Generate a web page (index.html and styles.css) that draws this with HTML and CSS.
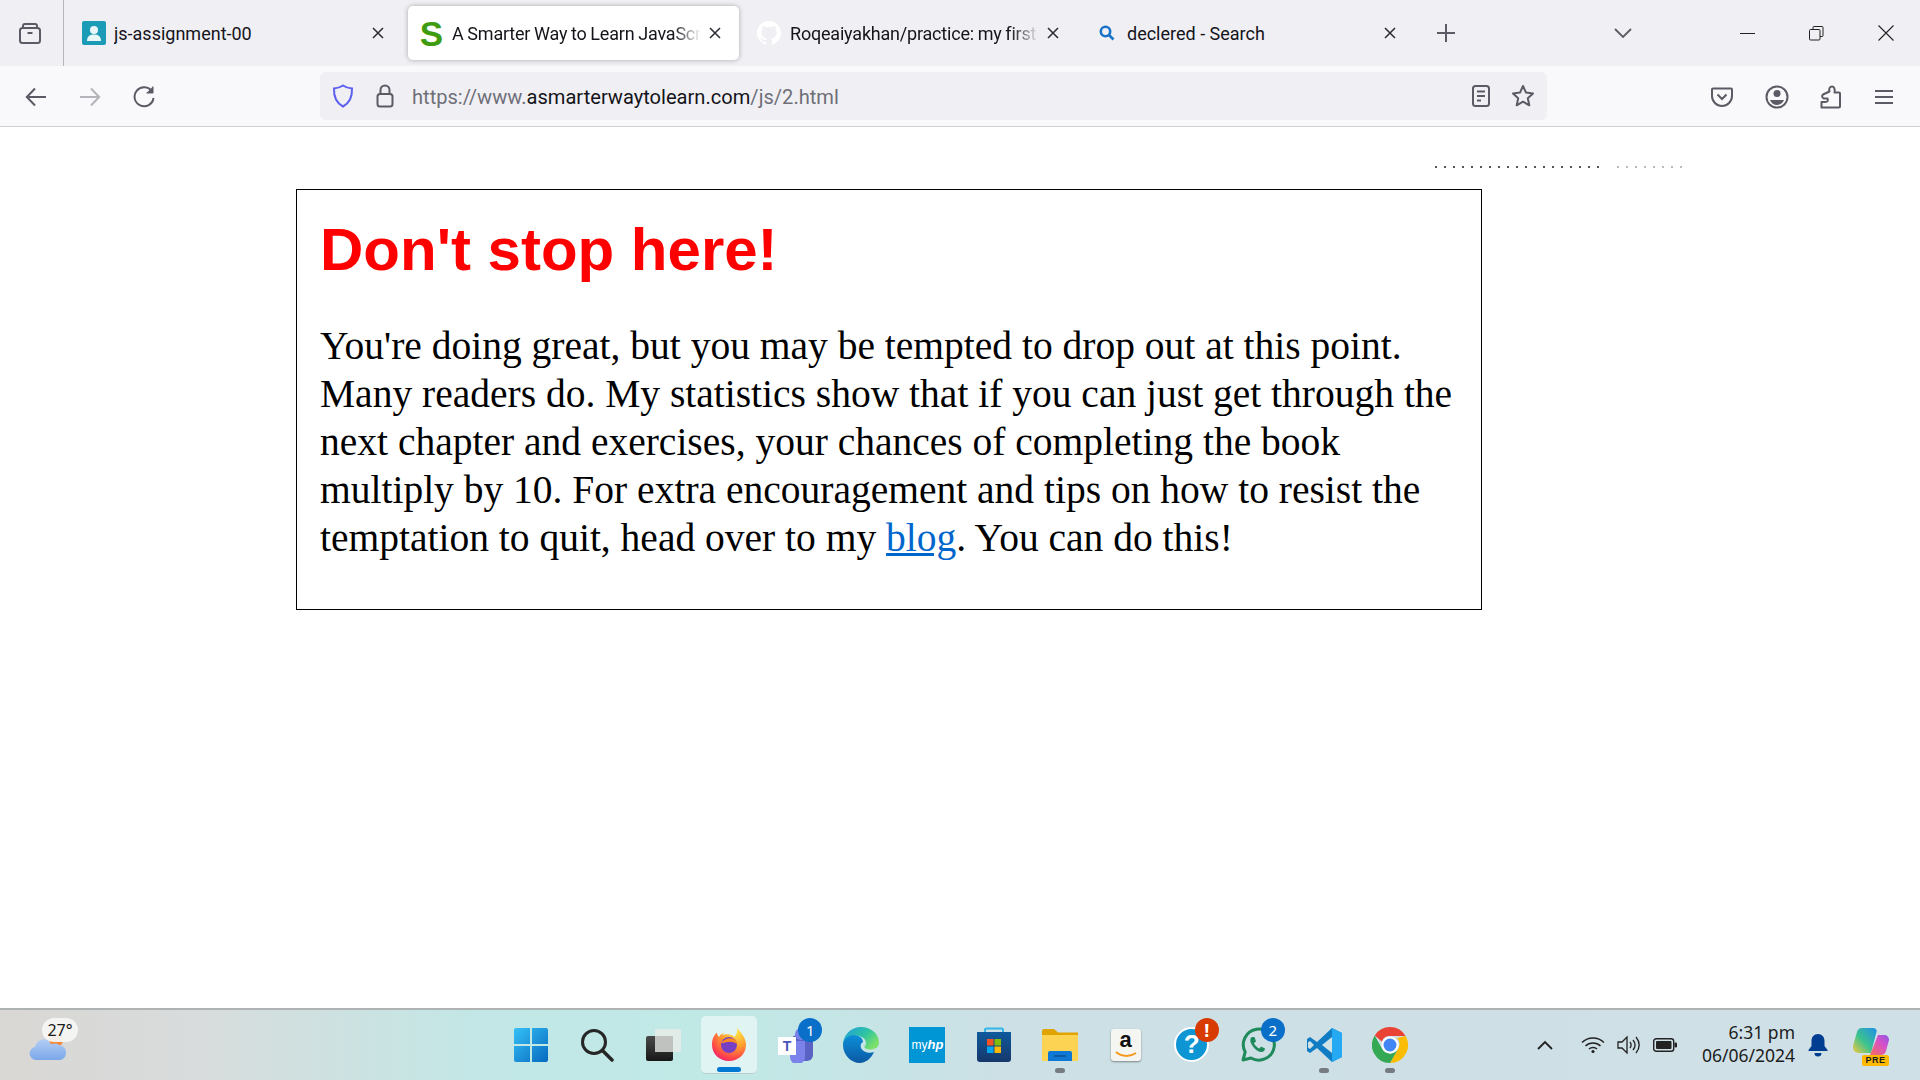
FILE: index.html
```html
<!DOCTYPE html><html lang="en">
<head>
  <meta charset="utf-8">
  <title>A Smarter Way to Learn JavaScript</title>
  <link rel="stylesheet" href="styles.css">
</head>
<body>

<div class="window">

  <header class="tabbar">
    <button class="tabview"><svg width="24" height="24" viewBox="0 0 24 24" fill="none" stroke="#5b5b66" stroke-width="2"><path d="M5 6.500V5a2 2 0 0 1 2-2h10a2 2 0 0 1 2 2v1.500"/><rect x="2" y="7" width="20" height="15" rx="2.500"/><path d="M9.500 12h5"/></svg></button>

    <div class="tab tab-first">
      <svg class="favicon" width="24" height="24" viewBox="0 0 24 24"><rect width="24" height="24" rx="2" fill="#1b9bb5"/><circle cx="12" cy="9" r="4" fill="#e8f6f8"/><path d="M5 20c0-5 3-6.500 7-6.500s7 1.500 7 6.500z" fill="#e8f6f8"/></svg>
      <span class="tab-title">js-assignment-00</span>
      <svg class="tab-close" width="12" height="12" viewBox="0 0 12 12"><path d="M1 1l10 10M11 1L1 11" stroke="#2b2a33" stroke-width="1.500"/></svg>
    </div>

    <div class="tab tab-active">
      <span class="s-logo">S</span>
      <span class="tab-title fade">A Smarter Way to Learn JavaScript</span>
      <svg class="tab-close" width="12" height="12" viewBox="0 0 12 12"><path d="M1 1l10 10M11 1L1 11" stroke="#2b2a33" stroke-width="1.500"/></svg>
    </div>

    <div class="tab tab-github">
      <svg class="favicon" width="24" height="24" viewBox="0 0 16 16"><path fill="#fff" d="M8 0C3.580 0 0 3.580 0 8c0 3.540 2.290 6.530 5.470 7.590.4.070.55-.17.55-.38v-1.340c-2.230.48-2.690-1.070-2.690-1.070-.36-.92-.89-1.170-.89-1.170-.73-.5.05-.49.05-.49.8.060 1.220.83 1.220.83.71 1.220 1.870.87 2.330.66.070-.52.28-.87.51-1.070-1.780-.2-3.640-.89-3.640-3.950 0-.87.31-1.590.82-2.150-.08-.2-.36-1.020.08-2.120 0 0 .67-.21 2.200.82a7.600 7.600 0 0 1 4 0c1.530-1.040 2.200-.82 2.200-.82.44 1.100.16 1.920.08 2.120.51.560.82 1.270.82 2.150 0 3.070-1.870 3.750-3.650 3.950.29.250.54.730.54 1.480v2.200c0 .21.15.46.55.38A8 8 0 0 0 16 8c0-4.420-3.580-8-8-8z"/></svg>
      <span class="tab-title fade">Roqeaiyakhan/practice: my first project</span>
      <svg class="tab-close" width="12" height="12" viewBox="0 0 12 12"><path d="M1 1l10 10M11 1L1 11" stroke="#2b2a33" stroke-width="1.500"/></svg>
    </div>

    <div class="tab tab-search">
      <svg class="favicon" width="16" height="16" viewBox="0 0 16 16" fill="none" stroke="#1a73c9" stroke-width="2.600"><circle cx="6.500" cy="6.500" r="4.700"/><path d="M10 10l4.500 4.500"/></svg>
      <span class="tab-title">declered - Search</span>
      <svg class="tab-close" width="12" height="12" viewBox="0 0 12 12"><path d="M1 1l10 10M11 1L1 11" stroke="#2b2a33" stroke-width="1.500"/></svg>
    </div>

    <svg class="newtab" width="18" height="18" viewBox="0 0 18 18"><path d="M9 0v18M0 9h18" stroke="#5b5b66" stroke-width="2"/></svg>
    <svg class="tablist" width="18" height="10" viewBox="0 0 18 10" fill="none"><path d="M1 1l8 8 8-8" stroke="#5b5b66" stroke-width="1.800"/></svg>

    <div class="wincontrols">
      <svg width="15" height="15" viewBox="0 0 15 15"><path d="M0 7.500h15" stroke="#222" stroke-width="1"/></svg>
      <svg width="15" height="15" viewBox="0 0 15 15" fill="none" stroke="#222"><rect x=".5" y="3.500" width="10.500" height="10.500" rx="1"/><path d="M4 3.500V1.500a1 1 0 0 1 1-1h8a1 1 0 0 1 1 1v8a1 1 0 0 1-1 1h-2"/></svg>
      <svg width="16" height="16" viewBox="0 0 16 16"><path d="M.500.500l15 15M15.500.500l-15 15" stroke="#222" stroke-width="1.100"/></svg>
    </div>
  </header>

  <nav class="toolbar">
    <div class="nav-buttons">
      <svg width="22" height="20" viewBox="0 0 22 20" fill="none" stroke="#5b5b66" stroke-width="2"><path d="M21 10H2M10 1.500L1.800 10l8.200 8.500"/></svg>
      <svg width="22" height="20" viewBox="0 0 22 20" fill="none" stroke="#b4b4ba" stroke-width="2"><path d="M1 10h19M12 1.500l8.200 8.500-8.200 8.500"/></svg>
      <svg width="22" height="24" viewBox="0 0 22 24" fill="none" stroke="#5b5b66" stroke-width="2"><path d="M19 6.500A9.500 9.500 0 1 0 20.500 13"/><path d="M20 1.500v6.500h-6.500" fill="#5b5b66" stroke-width="1"/></svg>
    </div>

    <div class="urlbar">
      <svg class="shield" width="22" height="24" viewBox="0 0 22 24" fill="none" stroke="#5d5fef" stroke-width="2"><path d="M11 1.500c3 2 6 2.800 9 3 .3 8-2.500 14.500-9 18-6.500-3.500-9.300-10-9-18 3-.2 6-1 9-3z"/></svg>
      <svg class="lock" width="20" height="24" viewBox="0 0 20 24" fill="none" stroke="#5b5b66" stroke-width="2"><rect x="2.500" y="10" width="15" height="12.500" rx="2.500"/><path d="M5.500 10V6a4.500 4.500 0 0 1 9 0v4"/></svg>
      <span class="url">https://www.<b>asmarterwaytolearn.com</b>/js/2.html</span>
      <svg class="reader" width="18" height="22" viewBox="0 0 18 22" fill="none" stroke="#5b5b66" stroke-width="2"><rect x="1" y="1" width="16" height="20" rx="2.500"/><path d="M5 6.500h8M5 11h8M5 15.500h4"/></svg>
      <svg class="star" width="24" height="24" viewBox="0 0 24 24" fill="none" stroke="#5b5b66" stroke-width="2" stroke-linejoin="round"><path d="M12 2l3 6.600 7 .8-5.200 4.800 1.500 7.100L12 17.700l-6.300 3.600 1.500-7.100L2 9.400l7-.8z"/></svg>
    </div>

    <div class="tool-buttons">
      <svg width="22" height="20" viewBox="0 0 22 20" fill="none" stroke="#5b5b66" stroke-width="2"><path d="M2 1.500h18a1 1 0 0 1 1 1V9a10 10 0 0 1-20 0V2.500a1 1 0 0 1 1-1z"/><path d="M6.500 7.500L11 12l4.500-4.500"/></svg>
      <svg width="24" height="24" viewBox="0 0 24 24"><circle cx="12" cy="12" r="10.500" fill="none" stroke="#5b5b66" stroke-width="2"/><circle cx="12" cy="8.500" r="3.500" fill="#5b5b66"/><path d="M5 15h14c-1 3-4 5-7 5s-6-2-7-5z" fill="#5b5b66"/></svg>
      <svg width="22" height="24" viewBox="0 0 22 24" fill="none" stroke="#5b5b66" stroke-width="2" stroke-linejoin="round"><path d="M1.500 22.500h17.500a1 1 0 0 0 1-1V8.500a1 1 0 0 0-1-1h-4.500c.8-3.500-.5-6-2.500-6S8.500 3.500 9.500 6.500L3 9.500c-1.500 1.500-1 3.500 1 4h3.500c1 2 0 3.500-2 3.500H1.500z"/></svg>
      <svg width="20" height="16" viewBox="0 0 20 16" fill="none" stroke="#5b5b66" stroke-width="2"><path d="M1 2h18M1 8h18M1 14h18"/></svg>
    </div>
  </nav>

  <main class="page">
    <div class="dots"><span class="dots-dark"></span><span class="dots-light"></span></div>
    <section class="box">
      <h1>Don't stop here!</h1>
      <p>You're doing great, but you may be tempted to drop out at this point.<br>
      Many readers do. My statistics show that if you can just get through the<br>
      next chapter and exercises, your chances of completing the book<br>
      multiply by 10. For extra encouragement and tips on how to resist the<br>
      temptation to quit, head over to my <a href="#">blog</a>. You can do this!</p>
    </section>
  </main>

  <footer class="taskbar">
    <div class="weather">
      <svg class="weather-icon" width="38" height="30" viewBox="0 0 38 30"><defs><linearGradient id="cloud" x1="0" y1="0" x2="0" y2="1"><stop offset="0" stop-color="#b3cef5"/><stop offset="1" stop-color="#7ba7ea"/></linearGradient></defs><circle cx="27" cy="9" r="7" fill="#f5893a"/><path d="M7 29a6.500 6.500 0 0 1-1-12.900C7 11 12 7 17 8.500c2.500.8 4 2.500 5 5 2-1.200 5.500-1.500 8 .5 4.500.5 7.500 4 7 8.500-.5 4-3 6.500-7 6.500z" fill="url(#cloud)"/></svg>
      <span class="temp">27°</span>
    </div>

    <div class="apps">
      <div class="app"><svg width="36" height="36" viewBox="0 0 36 36"><defs><linearGradient id="win" x1="0" y1="0" x2="1" y2="1"><stop offset="0" stop-color="#35c1f6"/><stop offset="1" stop-color="#0669bf"/></linearGradient></defs><path fill="url(#win)" d="M1 3a2 2 0 0 1 2-2h14v16H1zM19 1h14a2 2 0 0 1 2 2v14H19zM1 19h16v16H3a2 2 0 0 1-2-2zM19 19h16v14a2 2 0 0 1-2 2H19z"/></svg></div>

      <div class="app"><svg width="34" height="34" viewBox="0 0 34 34" fill="none" stroke="#262626"><circle cx="14" cy="14" r="11.500" stroke-width="3"/><path d="M22.500 22.500L32 32" stroke-width="3.500" stroke-linecap="round"/></svg></div>

      <div class="app"><svg width="36" height="34" viewBox="0 0 36 34"><defs><linearGradient id="tv" x1="0" y1="0" x2="0" y2="1"><stop offset="0" stop-color="#4a4a4a"/><stop offset="1" stop-color="#171717"/></linearGradient></defs><rect x="1" y="8" width="27" height="25" rx="2" fill="url(#tv)"/><rect x="10" y="1" width="26" height="23" rx="2" fill="#e9ece9" fill-opacity=".8"/><rect x="10" y="8" width="18" height="16" fill="#c0c2c0"/></svg></div>

      <div class="app app-active">
        <svg width="36" height="36" viewBox="0 0 36 36"><defs><radialGradient id="ffa" cx=".7" cy=".15" r="1"><stop offset="0" stop-color="#ffe747"/><stop offset=".45" stop-color="#ff9a2e"/><stop offset=".8" stop-color="#ff3e4d"/><stop offset="1" stop-color="#e31587"/></radialGradient></defs><path d="M26 1c1 3 3 4 5 7 3 4 4 8 4 11 0 9-7.500 16-17 16S1 28 1 19C1 13 3 9 6 6.500 6 9 7 10 8 11c1-2 3-4 6-4.500-2 1-2.500 2-2.500 3 3-2 9-2 12 1.500C26 8 27 4 26 1z" fill="url(#ffa)"/><circle cx="18" cy="19" r="8" fill="#7540c4"/><path d="M10 17c3-4 9-6 13-4 2 1 3 3 3 5-3-2-6-2.500-9-2-3 .5-5 1-7 1z" fill="#ff8a1f"/></svg>
        <span class="active-line"></span>
      </div>

      <div class="app">
        <svg width="36" height="36" viewBox="0 0 36 36"><rect x="14" y="8" width="22" height="26" rx="6" fill="#5a62c3"/><circle cx="24" cy="7" r="6" fill="#7b83eb"/><path d="M13 14h15v16a7 7 0 0 1-15 0z" fill="#7b83eb"/><rect x="1" y="10" width="18" height="18" fill="#fff"/><text x="10" y="24" class="teams-t">T</text></svg>
        <span class="badge badge-blue">1</span>
      </div>

      <div class="app"><svg width="36" height="36" viewBox="0 0 36 36"><defs><linearGradient id="edge1" x1="0" y1="0" x2="1" y2=".6"><stop offset="0" stop-color="#1b9de2"/><stop offset=".6" stop-color="#30c4a0"/><stop offset="1" stop-color="#7ce168"/></linearGradient><linearGradient id="edge2" x1="0" y1="0" x2="0" y2="1"><stop offset="0" stop-color="#0c8fd8"/><stop offset="1" stop-color="#0c59a4"/></linearGradient></defs><path d="M18 0c10 0 18 7 18 15.500 0 5-4.500 7-8.500 7-3 0-6-1-6-2.500 0-.5.5-1 1-2 1-1.500.5-5-2-7C14 7 8 8 4 12S0 20 0 18C0 8 8 0 18 0z" fill="url(#edge1)"/><path d="M0 18c0-6 6-10 11-10 6 0 9 4 9 7-2 1-3 3-2 6 2 4 8 6 13 4-3 7-9 11-14 11C8 36 0 28 0 18z" fill="url(#edge2)"/></svg></div>

      <div class="app"><span class="hp-tile">my<i>hp</i></span></div>

      <div class="app"><svg width="36" height="36" viewBox="0 0 36 36"><path d="M9 6V3a1.500 1.500 0 0 1 1.500-1.500h15A1.500 1.500 0 0 1 27 3v3" fill="none" stroke="#33b5e8" stroke-width="2"/><defs><linearGradient id="store" x1="0" y1="0" x2="0" y2="1"><stop offset="0" stop-color="#0f5a9c"/><stop offset="1" stop-color="#16386c"/></linearGradient></defs><path d="M1 5h34v27a3 3 0 0 1-3 3H4a3 3 0 0 1-3-3z" fill="url(#store)"/><rect x="11" y="12" width="6.500" height="6.500" fill="#f35325"/><rect x="18.500" y="12" width="6.500" height="6.500" fill="#81bc06"/><rect x="11" y="19.500" width="6.500" height="6.500" fill="#05a6f0"/><rect x="18.500" y="19.500" width="6.500" height="6.500" fill="#ffba08"/></svg></div>

      <div class="app">
        <svg width="36" height="32" viewBox="0 0 36 32"><path d="M0 2a2 2 0 0 1 2-2h10l4 3.500H36V10H0z" fill="#e0a300"/><path d="M0 6h35a1 1 0 0 1 1 1v25H0z" fill="#fcd353"/><path d="M6 32V24a2 2 0 0 1 2-2h20a2 2 0 0 1 2 2v8z" fill="#0f78d4"/><path d="M12 27h12" stroke="#0a4f90" stroke-width="1.500"/></svg>
        <span class="run-dot"></span>
      </div>

      <div class="app"><span class="amazon-tile">a<svg width="22" height="7" viewBox="0 0 22 7" fill="none"><path d="M1 1c6 5 14 5 20 1" stroke="#f59a1c" stroke-width="2"/></svg></span></div>

      <div class="app">
        <span class="help-circle">?</span>
        <span class="badge badge-red">!</span>
      </div>

      <div class="app">
        <svg width="36" height="36" viewBox="0 0 36 36" fill="none"><path d="M3 33l2.200-8A15.500 15.500 0 1 1 11 31z" stroke="#1f8a5b" stroke-width="3" stroke-linejoin="round"/><path d="M12 10c-2 1-2.500 4 0 8s6 7 9 7 4-2 4-3.500l-4-2-1.500 2c-2-.5-5-3.500-5.500-5.500l2-1.500-1.500-4.500z" fill="#1f8a5b"/></svg>
        <span class="badge badge-blue">2</span>
      </div>

      <div class="app">
        <svg width="36" height="36" viewBox="0 0 36 36"><path d="M26 1l10 5v24l-10 5-15-14-7 5-3-2v-12l3-2 7 5z" fill="#0f7cc4"/><path d="M26 1l10 5v24l-10 5z" fill="#25a9f2"/><path d="M26 10l-10 8 10 8z" fill="#cfe2e6"/><path d="M4 14l4 4-4 4-2-1.500v-5z" fill="#cfe2e6"/></svg>
        <span class="run-dot"></span>
      </div>

      <div class="app">
        <svg width="36" height="36" viewBox="0 0 36 36"><path d="M18 0a18 18 0 0 1 15.600 9H18a9 9 0 0 0-8.200 5.400L2.700 8.500A18 18 0 0 1 18 0z" fill="#ea4335"/><path d="M33.600 9A18 18 0 0 1 18 36l7.800-13.500A9 9 0 0 0 25 11z" fill="#fbbc04"/><path d="M2.700 8.500L10.500 22.500A9 9 0 0 0 25.800 22.500L18 36A18 18 0 0 1 2.700 8.500z" fill="#34a853"/><circle cx="18" cy="18" r="8.500" fill="#fff"/><circle cx="18" cy="18" r="6.500" fill="#4285f4"/></svg>
        <span class="run-dot"></span>
      </div>
    </div>

    <div class="tray">
      <svg class="tray-up" width="16" height="10" viewBox="0 0 16 10" fill="none"><path d="M1 9l7-7 7 7" stroke="#222" stroke-width="1.800"/></svg>
      <svg class="tray-wifi" width="24" height="18" viewBox="0 0 24 18" fill="none" stroke="#222" stroke-width="1.400"><path d="M1 6.500c6-6 16-6 22 0M4.500 10c4-4 11-4 15 0M8 13c2-2 6-2 8 0"/><circle cx="12" cy="15.500" r="1.600" fill="#222" stroke="none"/></svg>
      <svg class="tray-sound" width="24" height="20" viewBox="0 0 24 20" fill="none" stroke="#222" stroke-width="1.300"><path d="M1 7h4l5-5v16l-5-5H1zM13 7c1.500 2 1.500 4 0 6M16 5c2.500 3 2.500 7 0 10M19 2c4 5 4 11 0 16"/></svg>
      <svg class="tray-battery" width="24" height="16" viewBox="0 0 24 16"><rect x=".7" y="1.700" width="20" height="12.600" rx="2.500" fill="none" stroke="#222" stroke-width="1.400"/><rect x="3" y="4" width="15.500" height="8" rx="1" fill="#222"/><rect x="21.500" y="5.500" width="2.500" height="5" rx="1" fill="#222"/></svg>
      <div class="clock"><span>6:31 pm</span><span>06/06/2024</span></div>
      <svg class="tray-bell" width="20" height="24" viewBox="0 0 20 24"><path d="M10 1c4 0 6.500 3 6.500 7v5l3 4v1H.5v-1l3-4V8c0-4 2.500-7 6.500-7z" fill="#003e92"/><path d="M6.500 20h7a3.500 3.500 0 0 1-7 0z" fill="#003e92"/></svg>
      <div class="copilot">
        <svg width="36" height="30" viewBox="0 0 36 30"><defs><linearGradient id="cp1" x1="0" y1="1" x2="1" y2="0"><stop offset="0" stop-color="#f5c93c"/><stop offset=".45" stop-color="#3dc38d"/><stop offset="1" stop-color="#1f8fe8"/></linearGradient><linearGradient id="cp2" x1="0" y1="1" x2="1" y2="0"><stop offset="0" stop-color="#f4705b"/><stop offset=".6" stop-color="#d650c8"/><stop offset="1" stop-color="#8a58e8"/></linearGradient></defs><path d="M9 1h11c3 0 4 2 3.500 4L18 26H6C1 26-1 22 .5 17L4 5c.8-2.500 2.500-4 5-4z" fill="url(#cp1)"/><path d="M25 8h6c3 0 5 2 5 5l-3 11c-.8 2.500-2.500 4-5 4H17z" fill="url(#cp2)"/></svg>
        <span class="pre">PRE</span>
      </div>
    </div>
  </footer>

</div>

</body></html>
```

FILE: styles.css
```css
* {
  box-sizing: border-box;
}

html, body {
  margin: 0;
  height: 100%;
  background: #fff;
}

.window {
  width: 1920px;
  height: 1080px;
  display: flex;
  flex-direction: column;
  overflow: hidden;
}

/* tab strip */

.tabbar {
  height: 66px;
  background: #f0f0f4;
  display: flex;
  align-items: center;
  flex-shrink: 0;
}

.tabview {
  width: 64px;
  height: 66px;
  padding: 0 4px 0 0;
  margin: 0;
  background: none;
  border: 0;
  border-right: 1px solid #b5b5ba;
  display: flex;
  align-items: center;
  justify-content: center;
}

.tab {
  display: flex;
  align-items: center;
  height: 54px;
  font-family: Roboto, sans-serif;
  font-size: 18px;
  color: #15141a;
}

.tab-title {
  flex: 1;
  white-space: nowrap;
  overflow: hidden;
}

.tab-first {
  width: 344px;
  padding: 0 24px 0 18px;
}

.tab-active {
  width: 331px;
  background: #fff;
  border-radius: 5px;
  box-shadow: 0 0 5px rgba(0, 0, 0, 0.3);
  padding: 0 18px 0 10px;
}

.tab-github {
  width: 340px;
  padding: 0 20px 0 18px;
}

.tab-search {
  width: 340px;
  padding: 0 23px 0 20px;
}

.favicon {
  flex-shrink: 0;
  margin-right: 8px;
}

.tab-search .favicon {
  margin-right: 12px;
}

.tab-github .favicon {
  margin-right: 9px;
}

.tab-close {
  flex-shrink: 0;
  margin-left: 8px;
}

.fade {
  letter-spacing: -0.2px;
  word-spacing: -0.5px;
  -webkit-mask-image: linear-gradient(to right, #000 calc(100% - 28px), transparent);
  mask-image: linear-gradient(to right, #000 calc(100% - 28px), transparent);
}

.s-logo {
  width: 27px;
  margin-right: 7px;
  font-family: "Liberation Sans", sans-serif;
  font-weight: 700;
  font-size: 35px;
  line-height: 1;
  color: #3f9c11;
  text-align: center;
}

.newtab {
  margin-left: 18px;
}

.tablist {
  margin-left: 159px;
}

.wincontrols {
  margin-left: auto;
  padding-right: 26px;
  display: flex;
  align-items: center;
  gap: 54px;
}

/* address bar */

.toolbar {
  height: 61px;
  background: #f9f9fb;
  border-bottom: 1px solid #cfcfd8;
  display: flex;
  align-items: center;
  flex-shrink: 0;
}

.nav-buttons {
  width: 320px;
  padding: 2px 0 0 25px;
  display: flex;
  align-items: center;
  gap: 32px;
}

.urlbar {
  width: 1227px;
  height: 48px;
  background: #f0f0f4;
  border-radius: 6px;
  display: flex;
  align-items: center;
  padding: 0 12px 0 12px;
}

.lock {
  margin-left: 21px;
}

.url {
  flex: 1;
  margin: 2px 0 0 17px;
  font-family: Roboto, sans-serif;
  font-size: 20.100px;
  color: #6f6f78;
  white-space: nowrap;
}

.url b {
  font-weight: 400;
  color: #15141a;
}

.star {
  margin-left: 21px;
}

.tool-buttons {
  flex: 1;
  display: flex;
  align-items: center;
  justify-content: space-between;
  padding: 2px 26px 0 164px;
}

/* page content */

.page {
  flex: 1;
  padding-left: 296px;
}

.dots {
  height: 2px;
  margin: 39px 0 0 1139px;
  display: flex;
  gap: 12px;
}

.dots-dark {
  width: 170px;
  background: repeating-linear-gradient(to right, #555 0 2px, transparent 2px 9px);
}

.dots-light {
  width: 68px;
  background: repeating-linear-gradient(to right, #bbb 0 2px, transparent 2px 9px);
}

.box {
  width: 1186px;
  height: 421px;
  margin-top: 21px;
  padding: 0 23px;
  border: 1px solid #000;
  background: #fff;
}

.box h1 {
  margin: 25px 0 0;
  font-family: "Liberation Sans", sans-serif;
  font-weight: 700;
  font-size: 60px;
  line-height: 69px;
  color: #f00;
}

.box p {
  margin: 38px 0 0;
  font-family: "Liberation Serif", serif;
  font-size: 39.500px;
  line-height: 48px;
  color: #000;
  white-space: nowrap;
}

.box a {
  color: #0066cc;
}

/* taskbar */

.taskbar {
  height: 72px;
  flex-shrink: 0;
  display: flex;
  align-items: center;
  border-top: 2px solid #aeb2b2;
  background: linear-gradient(to right, #d9d7d4 0, #d8dcdc 200px, #c2e7e6 480px, #c0e9e6 720px, #cce0e5 1000px, #d0e0e7 1920px);
}

.weather {
  width: 498px;
  padding-left: 29px;
  height: 100%;
  position: relative;
}

.weather-icon {
  margin-top: 21px;
}

.temp {
  position: absolute;
  left: 42px;
  top: 8px;
  width: 36px;
  height: 24px;
  border-radius: 12px;
  background: rgba(245, 245, 243, 0.95);
  font-family: "Noto Sans", sans-serif;
  font-size: 16px;
  line-height: 24px;
  text-align: center;
  color: #1a1a1a;
}

.apps {
  display: flex;
  width: 925px;
}

.app {
  flex: 1;
  height: 58px;
  margin-top: -1px;
  display: flex;
  align-items: center;
  justify-content: center;
  position: relative;
}

.app-active {
  background: rgba(255, 255, 255, 0.5);
  border-radius: 5px;
  border-bottom: 1px solid #b8cfcf;
  margin-left: 5px;
  margin-right: 5px;
  flex: 0 0 56px;
}

.active-line {
  position: absolute;
  left: 16px;
  bottom: 1px;
  width: 24px;
  height: 5px;
  border-radius: 3px;
  background: #0078d4;
}

.run-dot {
  position: absolute;
  left: 28px;
  bottom: 1px;
  width: 10px;
  height: 5px;
  border-radius: 3px;
  background: #757b80;
}

.badge {
  position: absolute;
  top: 2px;
  left: 36px;
  width: 24px;
  height: 24px;
  border-radius: 50%;
  font-family: "Noto Sans", sans-serif;
  font-size: 15px;
  line-height: 24px;
  text-align: center;
  color: #fff;
}

.badge-blue {
  background: #0a6fc8;
}

.badge-red {
  background: #d83b01;
  font-weight: 700;
  font-size: 18px;
}

.teams-t {
  font-family: "Liberation Sans", sans-serif;
  font-weight: 700;
  font-size: 14px;
  fill: #4b53bc;
  text-anchor: middle;
}

.hp-tile {
  width: 36px;
  height: 36px;
  background: #0096d6;
  color: #fff;
  font-family: "Liberation Sans", sans-serif;
  font-size: 12px;
  line-height: 36px;
  text-align: center;
}

.hp-tile i {
  font-weight: 700;
  font-size: 13px;
}

.amazon-tile {
  width: 30px;
  height: 32px;
  background: #f5f5f2;
  border-radius: 3px;
  box-shadow: 0 1px 2px rgba(0, 0, 0, 0.4);
  font-family: "Liberation Sans", sans-serif;
  font-weight: 700;
  font-size: 22px;
  line-height: 22px;
  color: #111;
  text-align: center;
  display: flex;
  flex-direction: column;
  align-items: center;
}

.help-circle {
  width: 35px;
  height: 35px;
  border-radius: 50%;
  background: #0e95d3;
  border: 2px solid #fff;
  color: #fff;
  font-family: "Liberation Sans", sans-serif;
  font-weight: 700;
  font-size: 26px;
  line-height: 31px;
  text-align: center;
}

.tray {
  flex: 1;
  display: flex;
  align-items: center;
  padding-left: 114px;
  height: 100%;
}

.tray-wifi {
  margin-left: 28px;
}

.tray-sound {
  margin-left: 12px;
}

.tray-battery {
  margin-left: 12px;
}

.clock {
  margin-left: 20px;
  width: 98px;
  flex-shrink: 0;
  margin-top: -3px;
  display: flex;
  flex-direction: column;
  align-items: flex-end;
  font-family: "Noto Sans", sans-serif;
  font-size: 17.500px;
  line-height: 23px;
  color: #1c1c1c;
  white-space: nowrap;
}

.tray-bell {
  margin-left: 13px;
}

.copilot {
  margin-left: 25px;
  position: relative;
  height: 36px;
}

.pre {
  position: absolute;
  left: 9px;
  bottom: -3px;
  width: 27px;
  height: 11px;
  background: #ffb900;
  border-radius: 2px;
  font-family: "Liberation Sans", sans-serif;
  font-weight: 700;
  font-size: 9px;
  line-height: 11px;
  letter-spacing: 0.5px;
  text-align: center;
  color: #1a1a1a;
}
```
